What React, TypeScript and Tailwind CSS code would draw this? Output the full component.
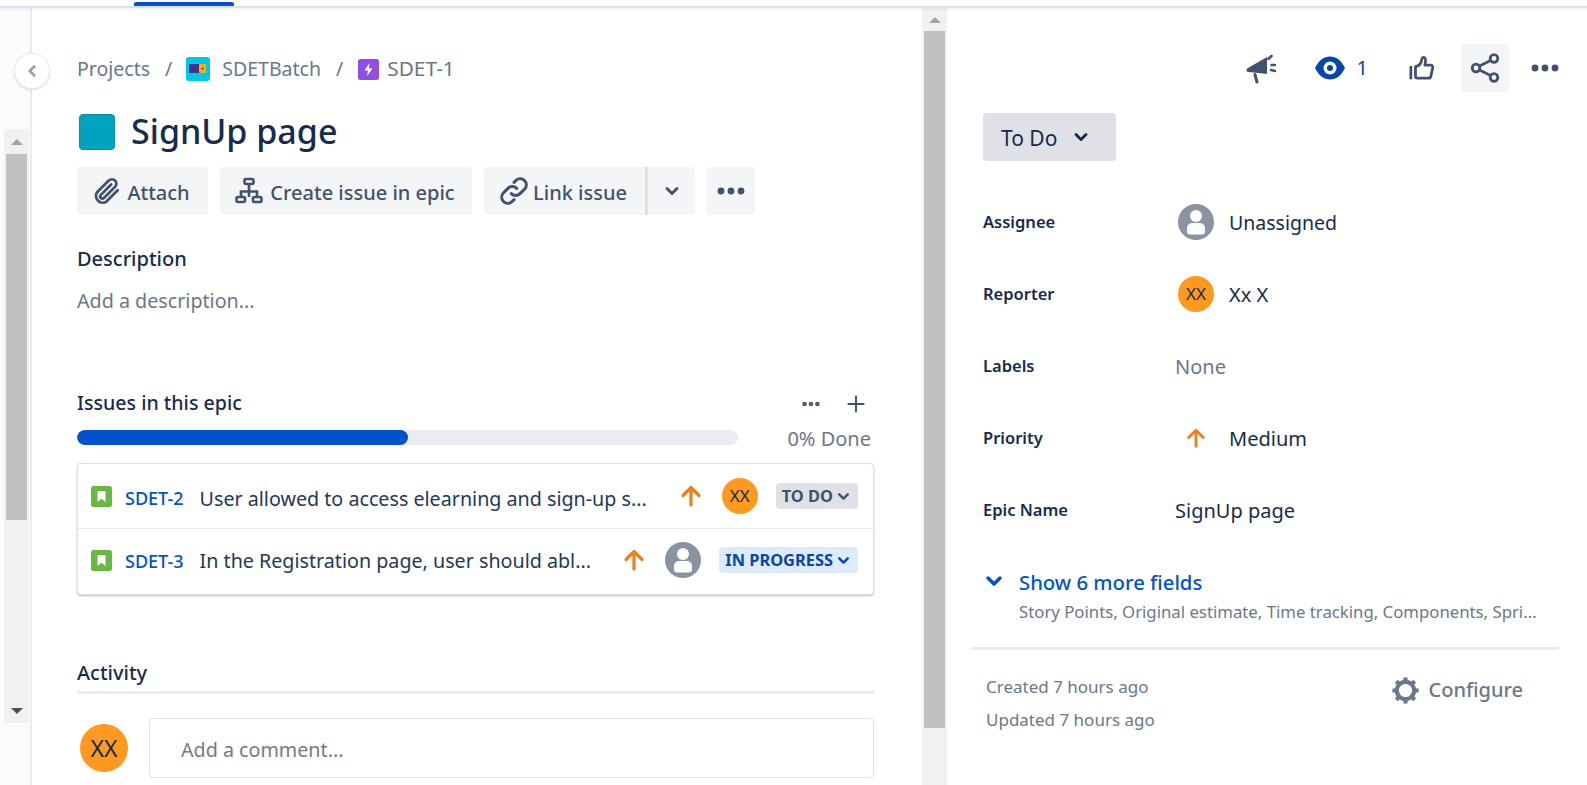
import React from "react";
import { ChevronDown, ChevronLeft, Plus, Ellipsis } from "lucide-react";

const ArrowUp = ({ size = 24 }: { size?: number }) => (
  <svg width={size} height={size} viewBox="0 0 24 24" fill="none" stroke="#E97F1F" strokeWidth="3.2" strokeLinecap="round" strokeLinejoin="round">
    <path d="M12 21V4M4 11.5 12 3.5l8 8" />
  </svg>
);

const Person = ({ size = 36 }: { size?: number }) => (
  <svg width={size} height={size} viewBox="0 0 36 36" className="shrink-0">
    <circle cx="18" cy="18" r="18" fill="#8993A4" />
    <circle cx="18" cy="12" r="6" fill="#fff" />
    <path d="M9 24a5 5 0 0 1 5-5h8a5 5 0 0 1 5 5v3.500a3 3 0 0 1-3 3H12a3 3 0 0 1-3-3z" fill="#fff" />
  </svg>
);

const XXAvatar = ({ size, text }: { size: string; text: string }) => (
  <div className={`${size} ${text} rounded-full bg-[#FF991F] text-[#172B4D] flex items-center justify-center shrink-0`}>
    XX
  </div>
);

const StoryIcon = () => (
  <svg width="21" height="21" viewBox="0 0 21 21" className="shrink-0">
    <rect width="21" height="21" rx="2.500" fill="#65BA43" />
    <path d="M6.500 5h8v11l-4-3.200-4 3.200z" fill="#fff" />
  </svg>
);

const ActionButton = ({ icon, label, className = "" }: { icon: React.ReactNode; label: string; className?: string }) => (
  <div className={`h-12 flex items-center justify-center bg-[#F4F5F7] rounded-[4px] text-[20px] font-medium text-[#42526E] ${className}`}>
    {icon}
    <span className="pt-[4px]">{label}</span>
  </div>
);

const ScrollArrow = ({ down = false }: { down?: boolean }) => (
  <div
    className={`w-0 h-0 border-x-[6px] border-x-transparent ${
      down ? "border-t-[6px] border-t-[#505050]" : "border-b-[6px] border-b-[#a3a3a3]"
    }`}
  />
);

const FieldRow = ({ label, children }: { label: string; children: React.ReactNode }) => (
  <div className="h-[72px] flex items-center">
    <div className="w-[192px] text-[16.5px] font-semibold text-[#172B4D]">{label}</div>
    <div className="flex items-center text-[#172B4D]">{children}</div>
  </div>
);

const IssueRow = ({
  id,
  title,
  avatar,
  status,
  statusClass,
  rowClass,
  textClass,
}: {
  id: string;
  title: string;
  avatar: React.ReactNode;
  status: string;
  statusClass: string;
  rowClass: string;
  textClass: string;
}) => (
  <div className={`h-[65px] flex items-center pl-[13px] pr-[15px] ${rowClass}`}>
    <StoryIcon />
    <span className={`ml-[13px] text-[18px] font-medium text-[#0052CC] shrink-0 ${textClass}`}>{id}</span>
    <span className={`ml-[16px] text-[19.7px] text-[#253858] flex-1 min-w-0 truncate ${textClass}`}>{title}</span>
    <div className="ml-4 shrink-0">
      <ArrowUp />
    </div>
    <div className="ml-[19px] shrink-0">{avatar}</div>
    <div className={`ml-[18px] h-[26px] px-[6px] rounded-[4px] flex items-center text-[16.4px] font-bold shrink-0 ${statusClass}`}>
      {status}
      <ChevronDown size={17} strokeWidth={3.500} className="ml-[2px]" />
    </div>
  </div>
);

export default function App() {
  return (
    <div className="h-[785px] w-[1587px] overflow-hidden flex flex-col bg-white font-['Noto_Sans',sans-serif]">
      <div className="h-2 shrink-0 relative z-10 bg-white border-b-2 border-[#DFE1EA] shadow-[0_1px_3px_rgba(9,30,66,0.08)] flex items-start pl-[134px] pt-[2px]">
        <div className="w-[100px] h-1 bg-[#0052CC] rounded-t-[2px]" />
      </div>

      <div className="flex-1 min-h-0 flex relative">
        {/* left rail */}
        <div className="w-[32px] shrink-0 bg-[#FAFBFC] border-r-2 border-[#EBECF0] pl-1 pt-[121px]">
          <div className="w-[25px] h-[594px] bg-[#F1F1F1] flex flex-col items-center">
            <div className="h-[25px] flex items-center justify-center">
              <ScrollArrow />
            </div>
            <div className="w-[21px] h-[366px] bg-[#C1C1C1]" />
            <div className="flex-1" />
            <div className="h-[25px] flex items-center justify-center">
              <ScrollArrow down />
            </div>
          </div>
        </div>

        <button className="absolute left-[14px] top-[45px] w-9 h-9 rounded-full bg-white border border-[#EBECF0] shadow-sm flex items-center justify-center text-[#97A0AF]">
          <ChevronLeft size={18} strokeWidth={3.500} />
        </button>

        {/* main */}
        <div className="w-[890px] shrink-0 pl-[45px] pr-[48px] overflow-hidden">
          <div className="h-[30px] mt-[46px] flex items-center text-[19.5px] text-[#6B778C]">
            <span>Projects</span>
            <span className="ml-[15px] mr-[14px]">/</span>
            <svg width="24" height="24" viewBox="0 0 24 24" className="shrink-0">
              <rect width="24" height="24" rx="3" fill="#00C7E6" />
              <rect x="3" y="7" width="11" height="9" fill="#403294" />
              <rect x="13" y="7" width="7" height="9" rx="1" fill="#FFAB00" />
              <path d="M15.500 11.500h2M16.500 10.500v2" stroke="#403294" strokeWidth="1" />
            </svg>
            <span className="ml-[12px]">SDETBatch</span>
            <span className="mx-[15px]">/</span>
            <svg width="21" height="21" viewBox="0 0 21 21" className="shrink-0">
              <rect width="21" height="21" rx="2.500" fill="#904EE2" />
              <path d="M11.500 4 6.500 11.500h3.500L9 17l5.500-7.500H11z" fill="#fff" />
            </svg>
            <span className="ml-2 text-[20.8px]">SDET-1</span>
          </div>

          <div className="h-[60px] mt-[17px] flex items-center">
            <div className="w-9 h-9 ml-[2px] mt-[1px] rounded-[4px] bg-[#00A3BF] border border-[#008DA6] shrink-0" />
            <h1 className="ml-4 text-[34px] font-medium text-[#172B4D]">SignUp page</h1>
          </div>

          <div className="mt-[6px] flex gap-3">
            <ActionButton
              className="w-[131px] gap-[4px] pr-[4px]"
              label="Attach"
              icon={
                <svg width="32" height="32" viewBox="0 0 24 24" fill="none" stroke="#42526E" strokeWidth="2.100" strokeLinecap="round">
                  <path d="M20 11.500 11.800 19.700a5 5 0 0 1-7-7l8.500-8.500a3.300 3.300 0 0 1 4.700 4.700l-8.300 8.300a1.600 1.600 0 0 1-2.300-2.300l7.700-7.700" />
                </svg>
              }
            />
            <ActionButton
              className="w-[252px] gap-[7px] pr-[2px]"
              label="Create issue in epic"
              icon={
                <svg width="28" height="28" viewBox="0 0 28 28" fill="none" stroke="#42526E" strokeWidth="2.600">
                  <rect x="9.500" y="2" width="9" height="5" rx="1.500" />
                  <rect x="1.500" y="20" width="8.500" height="5" rx="1.500" />
                  <rect x="18" y="20" width="8.500" height="5" rx="1.500" />
                  <path d="M14 7v13M6 20v-5.500h16V20" />
                </svg>
              }
            />
            <div className="h-12 w-[211px] flex rounded-[4px] overflow-hidden bg-[#F4F5F7] text-[20px] font-medium text-[#42526E]">
              <div className="w-[164px] flex items-center justify-center gap-[3px] pr-[4px] border-r-[3px] border-[#DFE1E6]">
                <svg width="32" height="32" viewBox="0 0 24 24" fill="none" stroke="#42526E" strokeWidth="2.300" strokeLinecap="round">
                  <path d="M10 14a4.500 4.500 0 0 0 6.500 0l3.500-3.500A4.600 4.600 0 0 0 13.500 4l-1.500 1.500" />
                  <path d="M14 10a4.500 4.500 0 0 0-6.500 0L4 13.500A4.600 4.600 0 0 0 10.500 20l1.500-1.500" />
                </svg>
                <span className="pt-[4px]">Link issue</span>
              </div>
              <div className="flex-1 flex items-center justify-center">
                <ChevronDown size={20} strokeWidth={3.500} />
              </div>
            </div>
            <div className="h-12 w-12 bg-[#F4F5F7] rounded-[4px] flex items-center justify-center">
              <svg width="28" height="8" viewBox="0 0 28 8" fill="#42526E">
                <circle cx="4" cy="4" r="3.400" />
                <circle cx="14" cy="4" r="3.400" />
                <circle cx="24" cy="4" r="3.400" />
              </svg>
            </div>
          </div>

          <div className="mt-[28px] text-[20px] font-medium text-[#172B4D] leading-[32px]">Description</div>
          <div className="mt-[10px] text-[19.7px] text-[#6B778C] leading-[32px]">Add a description...</div>

          <div className="mt-[70px] h-[32px] flex items-center justify-between">
            <span className="text-[19.6px] font-medium text-[#172B4D]">Issues in this epic</span>
            <div className="flex items-center text-[#42526E] pt-[2px]">
              <Ellipsis size={22} strokeWidth={3} />
              <Plus size={26} strokeWidth={1.800} className="ml-[21px] mr-[5px]" />
            </div>
          </div>

          <div className="mt-[11px] h-[15px] flex items-center">
            <div className="w-[661px] h-[15px] rounded-full bg-[#EBECF0] overflow-hidden">
              <div className="w-[331px] h-full bg-[#0052CC] rounded-full" />
            </div>
            <span className="ml-auto mr-[3px] pt-[2px] text-[20px] text-[#6B778C] whitespace-nowrap">0% Done</span>
          </div>

          <div className="mt-[18px] rounded-[4px] bg-white border border-[#DFE1E6] shadow-[0_1px_2px_rgba(9,30,66,0.3)]">
            <IssueRow
              id="SDET-2"
              title="User allowed to access elearning and sign-up s..."
              avatar={<XXAvatar size="w-9 h-9" text="text-[17px]" />}
              status="TO DO"
              statusClass="bg-[#DFE1E6] text-[#42526E]"
              rowClass="border-b border-[#EBECF0]"
              textClass="pt-[5px]"
            />
            <IssueRow
              id="SDET-3"
              title="In the Registration page, user should abl..."
              avatar={<Person />}
              status="IN PROGRESS"
              statusClass="bg-[#DEEBFF] text-[#0747A6]"
              rowClass="pb-[3px]"
              textClass="pt-[2px]"
            />
          </div>

          <div className="mt-[62px] text-[20px] font-medium text-[#172B4D] leading-[32px]">Activity</div>
          <div className="mt-[2px] h-[3px] bg-[#EBECF0]" />

          <div className="mt-[24px] flex items-start">
            <XXAvatar size="w-12 h-12 ml-[3px] mt-[6px]" text="text-[23px]" />
            <div className="ml-[21px] flex-1 h-[60px] border border-[#DFE1E6] rounded-[4px] flex items-center pl-[31px] pt-[4px] text-[19.7px] text-[#7A7A7A]">
              Add a comment...
            </div>
          </div>
        </div>

        {/* center scrollbar */}
        <div className="w-[25px] shrink-0 bg-[#F1F1F1] flex flex-col items-center">
          <div className="h-[23px] flex items-center justify-center">
            <ScrollArrow />
          </div>
          <div className="w-[21px] h-[697px] bg-[#C1C1C1]" />
        </div>

        {/* right panel */}
        <div className="flex-1 min-w-0 pl-[36px] pr-[28px]">
          <div className="h-12 mt-[36px] flex items-center justify-end text-[#42526E]">
            <svg width="32" height="32" viewBox="0 0 32 32" fill="#42526E">
              <path d="M2 16 21 5v17L3 20a2 2 0 0 1-1-4z" />
              <path d="M9 22.500 11 30" stroke="#42526E" strokeWidth="3" strokeLinecap="round" />
              <path d="M22.500 7l3-3M25.500 13h3.500M25 18l4 1" stroke="#42526E" strokeWidth="2.500" strokeLinecap="round" fill="none" />
            </svg>
            <svg width="32" height="24" viewBox="0 0 32 24" className="ml-[36px]">
              <path d="M1 12C5 4 10 .5 16 .5S27 4 31 12c-4 8-9 11.500-15 11.500S5 20 1 12z" fill="#0747A6" />
              <circle cx="16" cy="12" r="6.500" fill="#fff" />
              <circle cx="16" cy="12" r="3" fill="#0747A6" />
            </svg>
            <span className="ml-[11px] text-[20px] text-[#0747A6]">1</span>
            <svg width="26" height="28" viewBox="0 0 28 28" fill="none" stroke="#42526E" strokeWidth="3" strokeLinejoin="round" strokeLinecap="round" className="ml-[41px]">
              <path d="M2 13v12" />
              <path d="M7 12.500c3.500-.5 6-3.500 6.500-6.500.3-2 .5-3.500 2-3.500 2.500 0 3 3.500 1.500 8.500h6.500c1.500 0 2.500 1.500 2 3l-2 9c-.3 1.300-1.200 2-2.500 2H9c-1.200 0-2-.8-2-2z" />
            </svg>
            <div className="ml-[26px] w-12 h-12 rounded-[4px] bg-[#F4F5F7] flex items-center justify-center">
              <svg width="30" height="30" viewBox="0 0 30 30" fill="none" stroke="#42526E" strokeWidth="2.800">
                <circle cx="6" cy="15" r="3.800" />
                <circle cx="24" cy="5.500" r="3.800" />
                <circle cx="24" cy="24.500" r="3.800" />
                <path d="M9.500 13 20.500 7.500M9.500 17l11 5.500" />
              </svg>
            </div>
            <svg width="28" height="8" viewBox="0 0 28 8" fill="#42526E" className="ml-[22px]">
              <circle cx="4" cy="4" r="3.400" />
              <circle cx="14" cy="4" r="3.400" />
              <circle cx="24" cy="4" r="3.400" />
            </svg>
          </div>

          <div className="mt-[21px] w-[133px] h-12 bg-[#DFE1E6] rounded-[4px] flex items-center pl-[18px] text-[21px] text-[#172B4D]">
            <span className="pt-[4px]">To Do</span>
            <ChevronDown size={20} strokeWidth={3.500} className="ml-[14px]" />
          </div>

          <div className="mt-[25px]">
            <FieldRow label="Assignee">
              <div className="ml-[3px]">
                <Person />
              </div>
              <span className="ml-[15px] text-[19.5px] pt-[2px]">Unassigned</span>
            </FieldRow>
            <FieldRow label="Reporter">
              <XXAvatar size="w-9 h-9 ml-[3px]" text="text-[17px]" />
              <span className="ml-[15px] text-[20px] pt-[2px]">Xx X</span>
            </FieldRow>
            <FieldRow label="Labels">
              <span className="text-[#6B778C] text-[20px] pt-[2px]">None</span>
            </FieldRow>
            <FieldRow label="Priority">
              <div className="w-9 ml-[3px] flex justify-center">
                <ArrowUp size={22} />
              </div>
              <span className="ml-[15px] text-[20px] pt-[2px]">Medium</span>
            </FieldRow>
            <FieldRow label="Epic Name">
              <span className="text-[20px] pt-[2px]">SignUp page</span>
            </FieldRow>
          </div>

          <div className="mt-[19px] flex items-center">
            <ChevronDown size={26} strokeWidth={3.500} className="text-[#0052CC] w-[24px] ml-[-1px]" />
            <span className="ml-[13px] pt-[2px] text-[20.3px] font-medium text-[#0052CC]">Show 6 more fields</span>
          </div>
          <div className="ml-[36px] mt-[2px] text-[16.75px] text-[#6B778C] whitespace-nowrap overflow-hidden">
            Story Points, Original estimate, Time tracking, Components, Spri...
          </div>

          <div className="mt-[22px] h-[3px] bg-[#EBECF0] ml-[-12px]" />

          <div className="mt-[20px] flex items-start justify-between">
            <div className="ml-[3px] text-[17px] text-[#6B778C] leading-[33px]">
              <div>Created 7 hours ago</div>
              <div>Updated 7 hours ago</div>
            </div>
            <div className="mt-[4px] mr-[36px] flex items-center gap-[7px] text-[20px] font-medium text-[#6B778C]">
              <svg width="33" height="33" viewBox="0 0 24 24" fill="none" stroke="#6B778C" strokeWidth="3" strokeLinejoin="round">
                <circle cx="12" cy="12" r="6.300" />
                <path d="M12 2.500v3M12 18.500v3M2.500 12h3M18.500 12h3M5.300 5.300l2.200 2.200M16.500 16.500l2.200 2.200M5.300 18.700l2.200-2.200M16.500 7.500l2.200-2.200" />
              </svg>
              <span>Configure</span>
            </div>
          </div>
        </div>
      </div>
    </div>
  );
}
